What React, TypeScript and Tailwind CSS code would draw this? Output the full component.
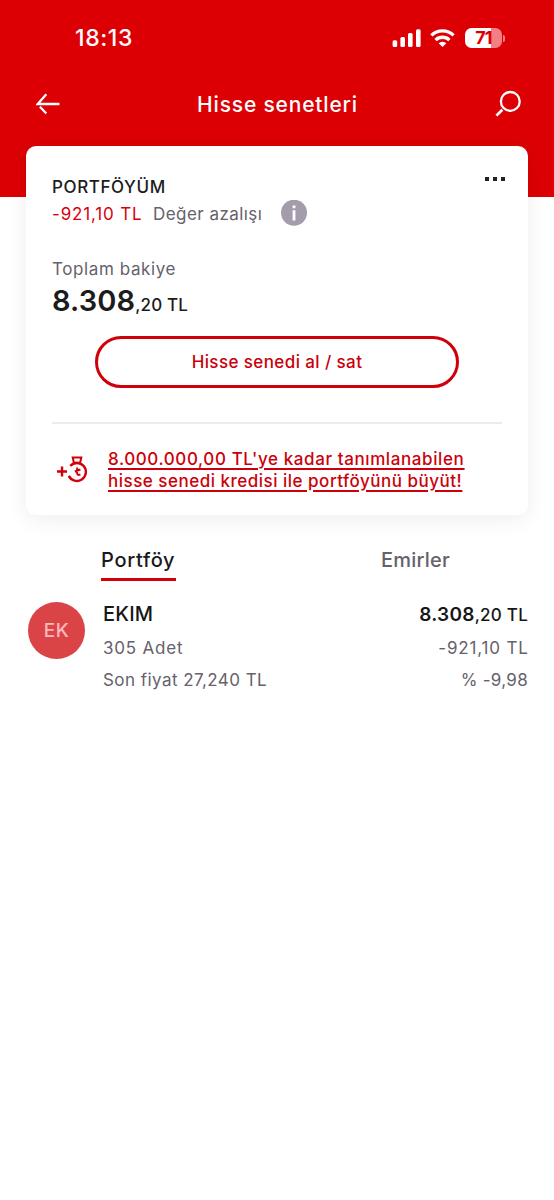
import React from "react";

function StatusBar() {
  return (
    <div className="flex h-[76px] items-center justify-between pl-[75px] pr-[49px] text-white">
      <span className="text-[23px] font-medium leading-7 tracking-[0.6px]">18:13</span>
      <div className="flex items-center">
        <svg width="29" height="20" viewBox="0 0 29 20" fill="currentColor">
          <rect x="0.6" y="12.2" width="4.6" height="6.8" rx="1.5" />
          <rect x="8.4" y="9" width="4.6" height="10" rx="1.5" />
          <rect x="16" y="5" width="4.6" height="14" rx="1.5" />
          <rect x="24" y="1.3" width="4.6" height="17.7" rx="1.5" />
        </svg>
        <svg className="ml-[9px]" width="25" height="20" viewBox="0 0 25 20" fill="none" stroke="currentColor" strokeWidth="3.3">
          <path d="M1.4 7.4a15.8 15.8 0 0 1 22.2 0" />
          <path d="M5.6 12.1a9.8 9.8 0 0 1 13.8 0" />
          <path d="M8.6 15.3a5.6 5.6 0 0 1 7.8 0L12.5 19z" fill="currentColor" stroke="none" />
        </svg>
        <div className="ml-[10px] flex h-5 w-[37px] items-center justify-center overflow-hidden rounded-[6.5px] bg-[linear-gradient(90deg,#fff_0,#fff_26px,#f17f84_26px)] text-[18px] font-bold leading-5 tracking-[-0.8px] text-[#dc0005]">
          71
        </div>
        <div className="ml-[1px] h-[7px] w-[2px] rounded-r-full bg-[#f17f84]" />
      </div>
    </div>
  );
}

function NavBar() {
  return (
    <div className="flex h-14 items-center justify-between pl-9 pr-[33px] text-white">
      <svg width="24" height="22" viewBox="0 0 24 22" fill="none" stroke="currentColor" strokeWidth="2.3">
        <path d="M10.3 1.2 1.7 11H23.5M3.9 13.8l6.4 6.7" />
      </svg>
      <h1 className="mt-[2px] text-[21px] font-medium leading-7 tracking-[0.82px]">Hisse senetleri</h1>
      <svg width="26" height="28" viewBox="0 0 26 28" fill="none" stroke="currentColor" strokeWidth="2.3">
        <circle cx="15.3" cy="11.4" r="9.4" />
        <path d="M7.3 19.7 1.4 25.6" strokeWidth="2.7" />
      </svg>
    </div>
  );
}

function LoanIcon() {
  return (
    <svg className="shrink-0" width="34" height="28" viewBox="0 0 34 28" fill="none" stroke="#d20008" strokeWidth="2.4">
      <path d="M1 16.5h10M6 11.5v10" />
      <path d="M14.2 10.9a9 9 0 1 1-1.4 10" />
      <path d="M16.7 2.4h8.6l-1.2 5.4h-6.2z" strokeWidth="2" />
      <path d="M21.2 12.5v6.4q.4 1.8 3.2 .5M18.8 16.5l5.6-2" strokeWidth="1.9" />
    </svg>
  );
}

function PortfolioCard() {
  return (
    <section className="mx-[26px] -mt-[51px] flex h-[369px] flex-col rounded-[10px] bg-white px-[26px] shadow-[0_4px_22px_rgba(0,0,0,0.07)]">
      <div className="flex justify-between pt-[29px]">
        <h2 className="text-[17px] font-medium leading-6 tracking-[0.6px] text-[#1c1c1c]">PORTFÖYÜM</h2>
        <div className="-mr-[3px] mt-[2px] flex gap-1">
          <span className="size-1 bg-[#222]" />
          <span className="size-1 bg-[#222]" />
          <span className="size-1 bg-[#222]" />
        </div>
      </div>
      <div className="flex h-[27px] items-center whitespace-nowrap text-[17px] leading-6">
        <span className="w-[90px] pt-[2px] tracking-[0.85px] text-[#d8000c]">-921,10 TL</span>
        <span className="ml-[11px] w-[109px] pt-[2px] tracking-[0.45px] text-[#66616b]">Değer azalışı</span>
        <svg className="ml-[19px]" width="26" height="26" viewBox="0 0 26 26">
          <circle cx="13" cy="12.7" r="13" fill="#a39dab" />
          <path d="M11.6 5.4h2.8v2.8h-2.8zM11.6 10.2h2.8v10.4h-2.8z" fill="#fff" />
        </svg>
      </div>
      <div className="mt-[31px] text-[17px] leading-6 tracking-[0.6px] text-[#66616b]">Toplam bakiye</div>
      <div className="mt-[2px] flex h-9 items-baseline leading-9 text-[#1c1c1c]">
        <span className="text-[29px] font-semibold tracking-[0.1px]">8.308</span>
        <span className="text-[17px] font-medium tracking-[0.2px]">,20 TL</span>
      </div>
      <button className="ml-[43px] mt-[17px] flex h-[52px] w-[364px] shrink-0 items-center justify-center rounded-full border-3 border-[#d0000b] pt-[2px] text-[17px] font-medium tracking-[0.4px] text-[#c9000c]">
        Hisse senedi al / sat
      </button>
      <div className="mt-[34px] h-[2px] shrink-0 bg-[#ececec]" />
      <div className="mt-[25px] flex text-[17px] font-medium leading-[21.5px] text-[#cc000a] underline decoration-[1.5px] underline-offset-[3px]">
        <div className="ml-1 mr-[18px] mt-[6px]">
          <LoanIcon />
        </div>
        <a className="whitespace-nowrap">
          <span className="tracking-[0.6px]">8.000.000,00 TL'ye kadar tanımlanabilen</span>
          <br />
          <span className="tracking-[0.5px]">hisse senedi kredisi ile portföyünü büyüt!</span>
        </a>
      </div>
    </section>
  );
}

function Tabs() {
  return (
    <div className="flex h-[66px] text-[20px] font-medium leading-6">
      <div className="flex w-1/2 justify-center pt-[33px]">
        <div className="h-[33px] w-[75px] whitespace-nowrap border-b-[3px] border-[#d3000a] tracking-[0.7px] text-[#1a1a1a]">Portföy</div>
      </div>
      <div className="flex w-1/2 justify-center pt-[33px] tracking-[0.25px] text-[#66616b]">Emirler</div>
    </div>
  );
}

function Holding() {
  return (
    <div className="flex pl-7 pr-[26px] pt-[21px] text-[17px] text-[#66616b]">
      <div className="flex size-[57px] items-center justify-center rounded-full bg-[#db4447] pt-[2px] text-[19px] font-medium tracking-[0.4px] text-[#fbb8bb]">EK</div>
      <div className="ml-[18px] flex-1 whitespace-nowrap">
        <div className="-mt-px text-[20px] font-medium leading-[26px] tracking-[0.2px] text-[#171717]">EKIM</div>
        <div className="mt-[9px] leading-6 tracking-[0.8px]">305 Adet</div>
        <div className="mt-2 leading-6 tracking-[0.45px]">Son fiyat 27,240 TL</div>
      </div>
      <div className="whitespace-nowrap text-right">
        <div className="text-[17px] font-medium leading-[26px] tracking-[0.25px] text-[#171717]">
          <span className="text-[19px] font-semibold">8.308</span>,20 TL
        </div>
        <div className="-mr-[0.8px] mt-2 leading-6 tracking-[0.85px]">-921,10 TL</div>
        <div className="mt-2 leading-6 tracking-[0.3px]">% -9,98</div>
      </div>
    </div>
  );
}

export default function App() {
  return (
    <main className="h-[1200px] w-[554px] overflow-hidden bg-white font-['Inter','Liberation_Sans',sans-serif]">
      <header className="h-[197px] bg-[#dc0005]">
        <StatusBar />
        <NavBar />
      </header>
      <PortfolioCard />
      <Tabs />
      <Holding />
    </main>
  );
}
